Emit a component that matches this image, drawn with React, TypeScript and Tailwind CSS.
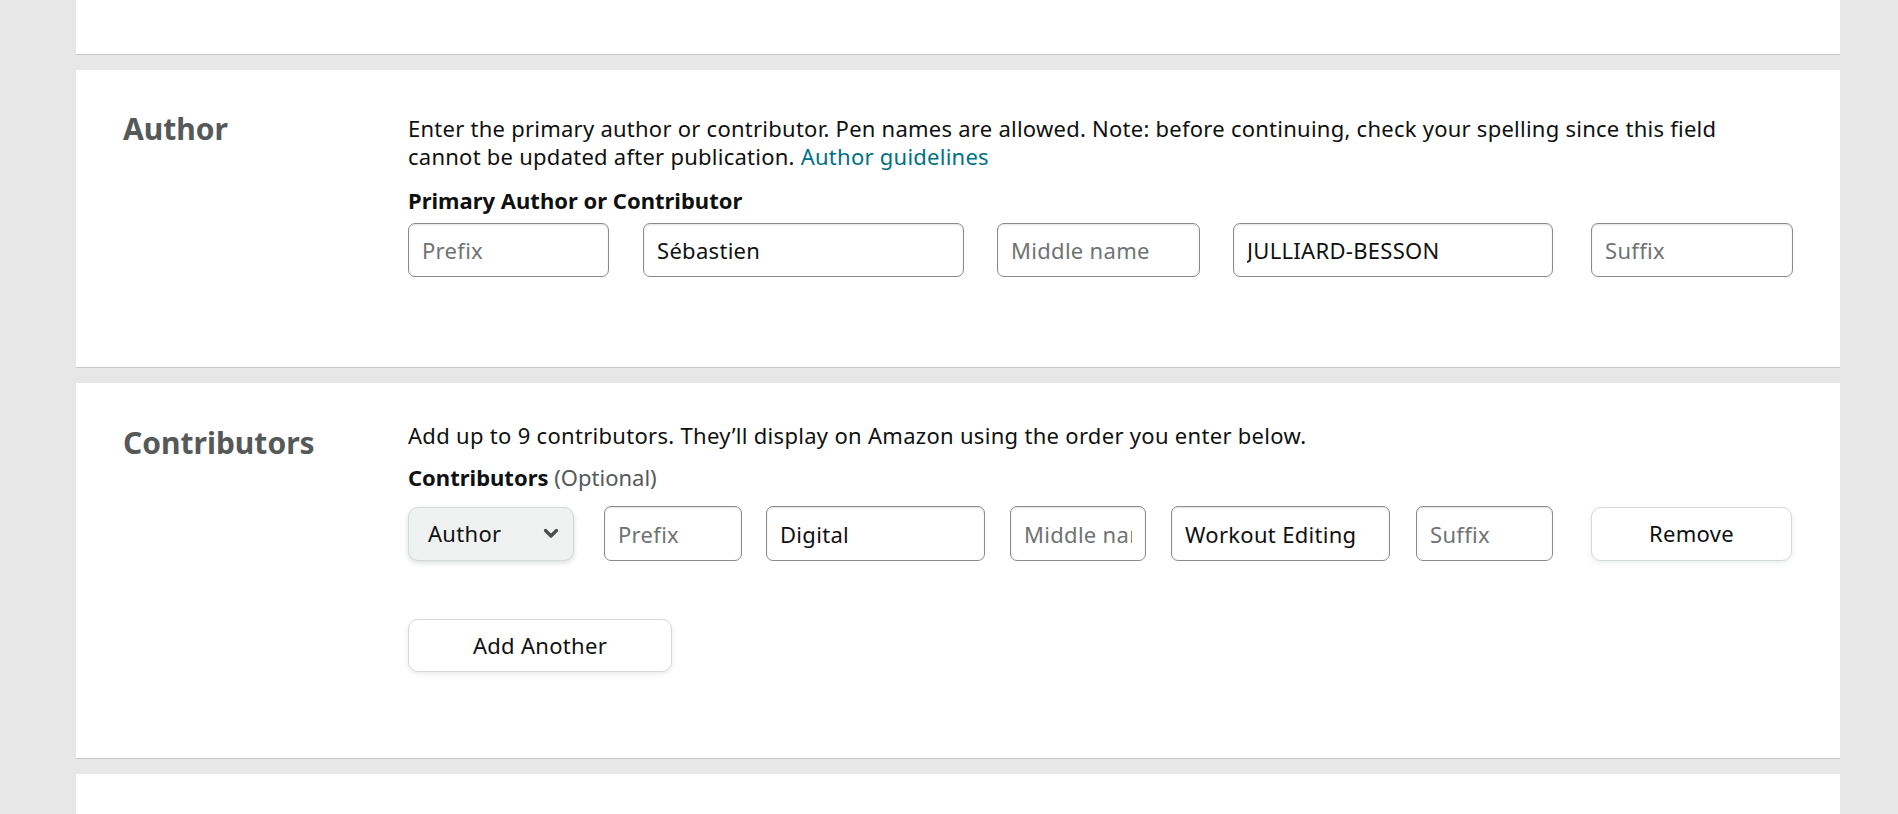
import { ChangeEvent, useState } from "react";

const inputCls =
  "rounded-[7px] border border-[#888c8c] bg-white px-[13px] text-[22px] tracking-[0.3px] text-[#0f1111] placeholder:text-[#6f7373] shadow-[inset_0_1px_2px_rgba(15,17,17,0.12)] outline-none";

const Field = ({ w, value, placeholder }: { w: string; value?: string; placeholder: string }) => {
  const [val, setVal] = useState(value ?? "");
  return (
    <input
      value={val}
      onChange={(e: ChangeEvent<HTMLInputElement>) => setVal(e.target.value)}
      placeholder={placeholder}
      className={`${inputCls} ${w}`}
    />
  );
};

const App = () => {
  return (
    <div className="min-h-screen bg-[#e7e7e7] pl-[76px] pr-[58px] font-['Noto_Sans',sans-serif] text-[#0f1111]">
      <div className="h-[55px] border-b border-[#c9c9c9] bg-white" />

      {/* Author */}
      <section className="mt-[15px] flex border-b border-[#c9c9c9] bg-white pl-[47px] pr-[47px] pt-[44px] pb-[90px]">
        <h2 className="w-[285px] shrink-0 text-[30px] font-bold leading-[30px] text-[#565959]">Author</h2>
        <div className="flex-1">
          <p className="text-[22px] leading-[28px] tracking-[0.25px]">
            Enter the primary author or contributor. Pen names are allowed. Note: before continuing, check your spelling since this field
            <br />
            cannot be updated after publication.{" "}
            <a href="#" className="text-[#007185] hover:underline">
              Author guidelines
            </a>
          </p>
          <label className="mt-[16px] block text-[22px] font-bold leading-[28px]">Primary Author or Contributor</label>
          <div className="mt-[9px] flex">
            <Field w="h-[54px] w-[201px]" placeholder="Prefix" />
            <Field w="h-[54px] ml-[34px] w-[321px]" value="Sébastien" placeholder="First name" />
            <Field w="h-[54px] ml-[33px] w-[203px]" placeholder="Middle name" />
            <Field w="h-[54px] ml-[33px] w-[320px]" value="JULLIARD-BESSON" placeholder="Last name" />
            <Field w="h-[54px] ml-[38px] w-[202px]" placeholder="Suffix" />
          </div>
        </div>
      </section>

      {/* Contributors */}
      <section className="mt-[15px] flex border-b border-[#c9c9c9] bg-white pl-[47px] pr-[47px] pt-[38px] pb-[86px]">
        <h2 className="mt-[7px] w-[285px] shrink-0 text-[30px] font-bold leading-[30px] text-[#565959]">Contributors</h2>
        <div className="flex-1">
          <p className="text-[22px] leading-[28px] tracking-[0.3px]">
            Add up to 9 contributors. They’ll display on Amazon using the order you enter below.
          </p>
          <label className="mt-[14px] block text-[22px] leading-[28px]">
            <span className="font-bold">Contributors</span> <span className="text-[#565959]">(Optional)</span>
          </label>
          <div className="mt-[15px] flex items-center">
            <button className="flex h-[54px] w-[166px] items-center justify-between rounded-[10px] border border-[#d5d9d9] bg-[#f0f2f2] pl-[19px] pr-[14px] text-[22px] tracking-[0.3px] shadow-[0_2px_5px_rgba(15,17,17,0.15)]">
              Author
              <svg width="16" height="11" viewBox="0 0 16 11" fill="none">
                <path d="M2.5 2.5 L8 8 L13.5 2.5" stroke="#4a4d4d" strokeWidth="3.2" strokeLinecap="round" strokeLinejoin="round" />
              </svg>
            </button>
            <Field w="h-[55px] ml-[30px] w-[138px]" placeholder="Prefix" />
            <Field w="h-[55px] ml-[24px] w-[219px]" value="Digital" placeholder="First name" />
            <Field w="h-[55px] ml-[25px] w-[136px]" placeholder="Middle name" />
            <Field w="h-[55px] ml-[25px] w-[219px]" value="Workout Editing" placeholder="Last name" />
            <Field w="h-[55px] ml-[26px] w-[137px]" placeholder="Suffix" />
            <button className="ml-[38px] h-[54px] w-[201px] rounded-[10px] border border-[#d5d9d9] bg-white text-[22px] tracking-[0.3px] shadow-[0_2px_5px_rgba(213,217,217,0.5)]">
              Remove
            </button>
          </div>
          <button className="mt-[58px] h-[53px] w-[264px] rounded-[10px] border border-[#d5d9d9] bg-white text-[22px] tracking-[0.3px] shadow-[0_2px_5px_rgba(213,217,217,0.5)]">
            Add Another
          </button>
        </div>
      </section>

      <div className="mt-[15px] h-[60px] bg-white" />
    </div>
  );
};

export default App;
